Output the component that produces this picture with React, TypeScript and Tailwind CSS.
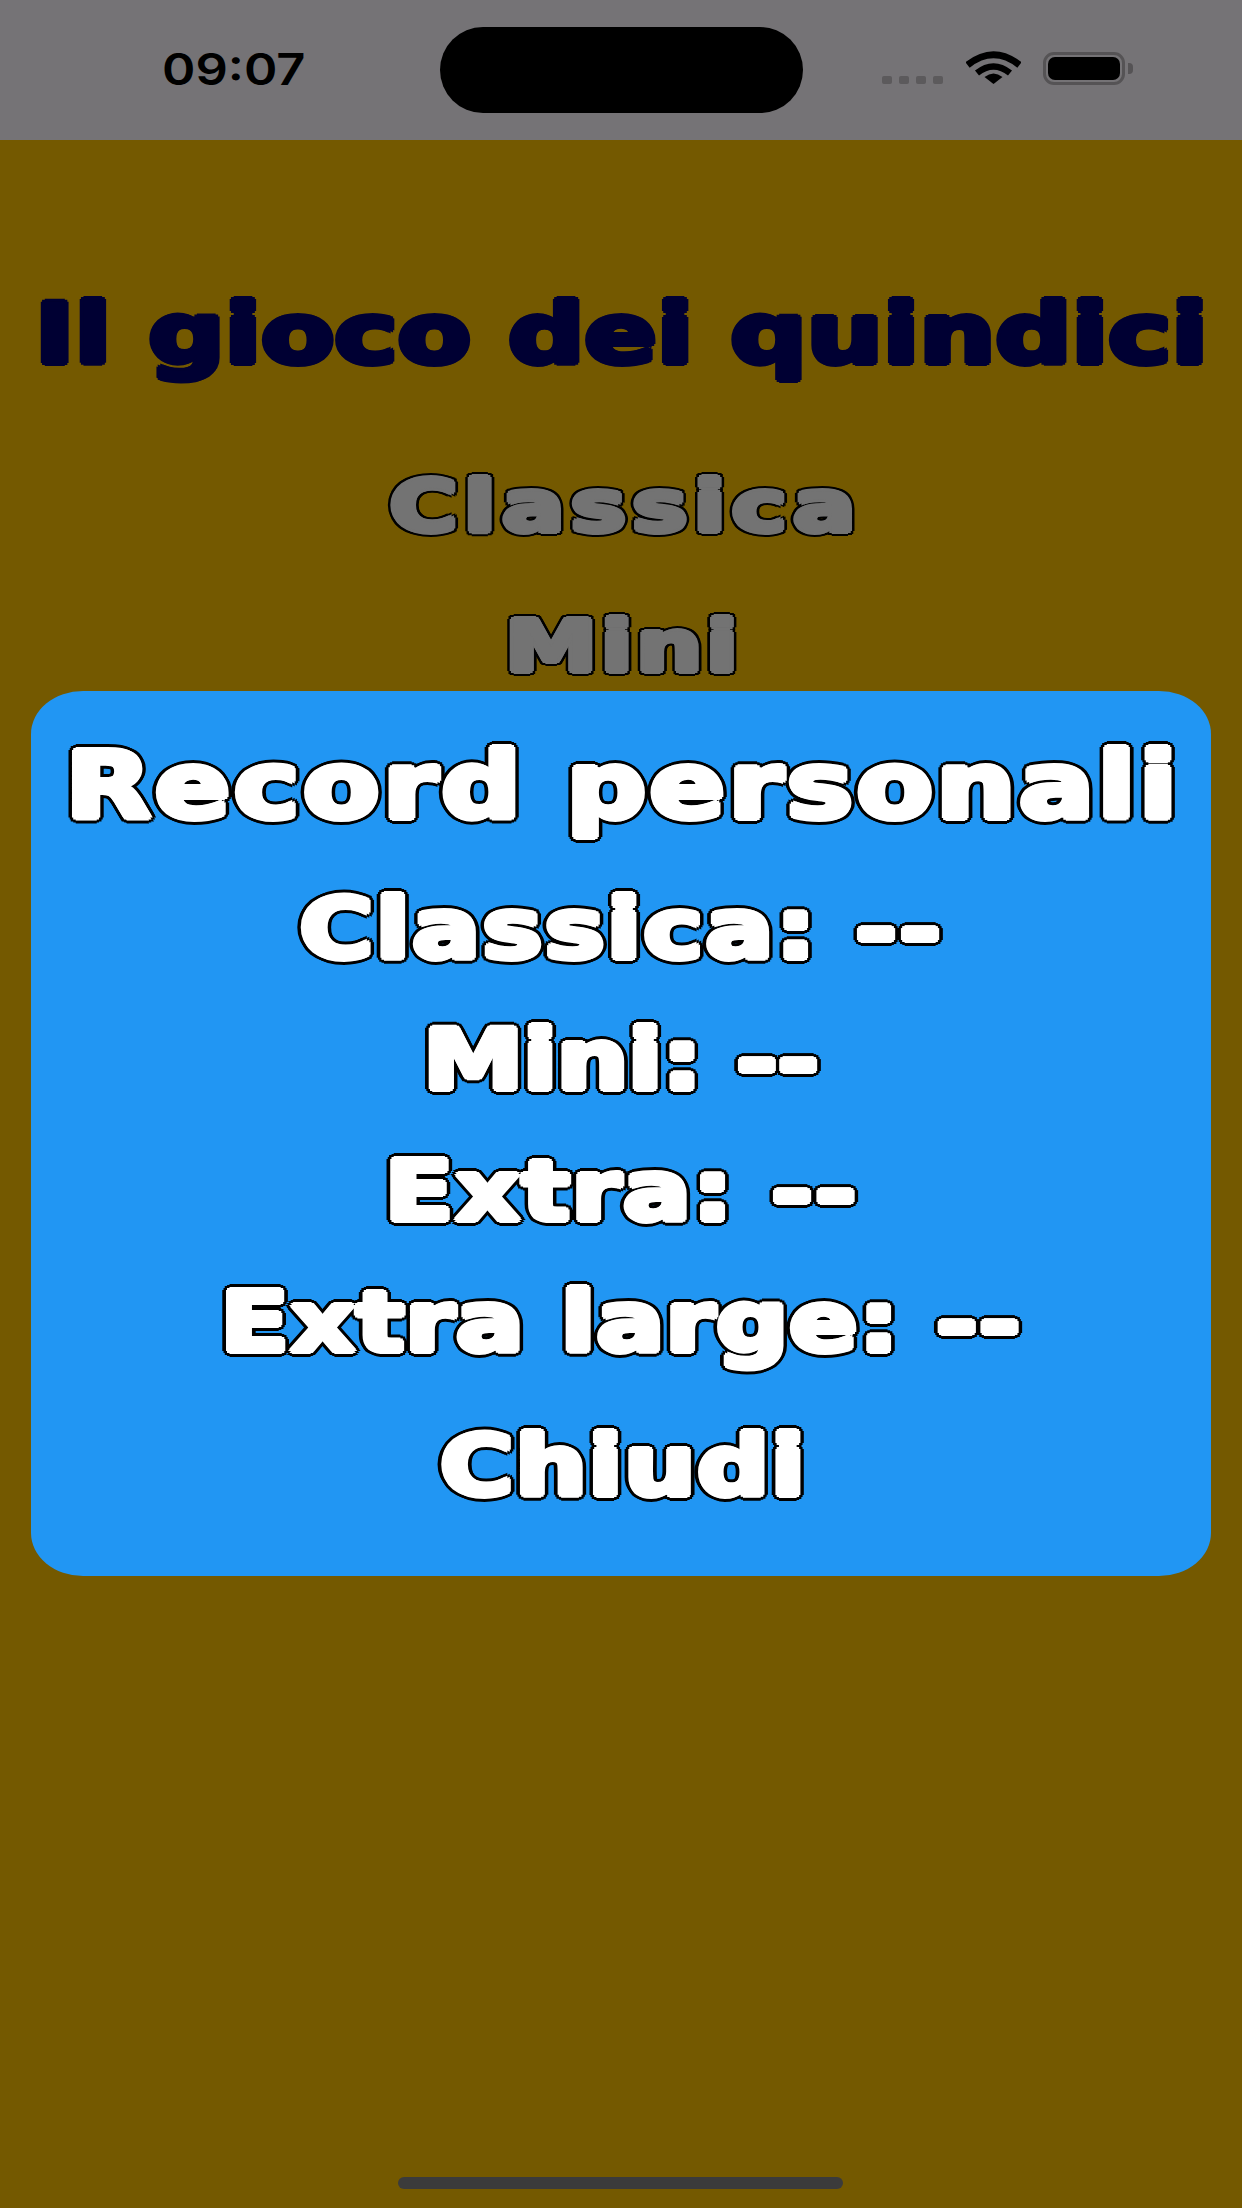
import React from 'react';

const ROUND_WHITE =
  'text-white [text-shadow:3px_0_0_#fff,-3px_0_0_#fff,0_3px_0_#fff,0_-3px_0_#fff,2px_2px_0_#fff,-2px_2px_0_#fff,2px_-2px_0_#fff,-2px_-2px_0_#fff,6px_0_0_#000,-6px_0_0_#000,0_6px_0_#000,0_-6px_0_#000,4px_4px_0_#000,-4px_4px_0_#000,4px_-4px_0_#000,-4px_-4px_0_#000,5px_2px_0_#000,-5px_2px_0_#000,5px_-2px_0_#000,-5px_-2px_0_#000,2px_5px_0_#000,-2px_5px_0_#000,2px_-5px_0_#000,-2px_-5px_0_#000]';

const ROUND_GRAY =
  'text-[#737373] [text-shadow:3px_0_0_#737373,-3px_0_0_#737373,0_3px_0_#737373,0_-3px_0_#737373,2px_2px_0_#737373,-2px_2px_0_#737373,2px_-2px_0_#737373,-2px_-2px_0_#737373,5px_0_0_#000,-5px_0_0_#000,0_5px_0_#000,0_-5px_0_#000,4px_3px_0_#000,-4px_3px_0_#000,4px_-3px_0_#000,-4px_-3px_0_#000,3px_4px_0_#000,-3px_4px_0_#000,3px_-4px_0_#000,-3px_-4px_0_#000]';

const ROUND_NAVY =
  'text-[#000033] [text-shadow:3px_0_0_#000033,-3px_0_0_#000033,0_3px_0_#000033,0_-3px_0_#000033,2px_2px_0_#000033,-2px_2px_0_#000033,2px_-2px_0_#000033,-2px_-2px_0_#000033]';

const FONT = "font-['DejaVu_Sans',sans-serif] font-bold whitespace-nowrap";

const StatusBar: React.FC = () => (
  <div className="flex h-[140px] items-start bg-[#757376]">
    <div className="w-[440px] pt-[43px] pl-[162px]">
      <span className="inline-block origin-left scale-x-[1.15] font-['Inter',sans-serif] text-[44px] leading-[52px] font-semibold text-black">
        09:07
      </span>
    </div>
    <div className="mt-[27px] h-[86px] w-[363px] rounded-[43px] bg-black" />
    <div className="ml-[79px] flex gap-[7px] pt-[76px]">
      <span className="h-[8px] w-[10px] rounded-[2px] bg-[#5c5a5c]" />
      <span className="h-[8px] w-[10px] rounded-[2px] bg-[#5c5a5c]" />
      <span className="h-[8px] w-[10px] rounded-[2px] bg-[#5c5a5c]" />
      <span className="h-[8px] w-[10px] rounded-[2px] bg-[#5c5a5c]" />
    </div>
    <svg className="mt-[51px] ml-[23px]" width="55" height="33" viewBox="0 0 55 33">
      <path d="M1.5 14 Q27.5 -6.5 53.5 14" fill="none" stroke="#000" strokeWidth="7" />
      <path d="M11 22 Q27.5 9 44 22" fill="none" stroke="#000" strokeWidth="6.5" />
      <path d="M18.5 26 Q27.5 19 36.5 26 L27.5 33 Z" fill="#000" />
    </svg>
    <div className="mt-[52px] ml-[22px] flex items-center">
      <div className="h-[33px] w-[82px] rounded-[11px] border-[3px] border-[#555355] p-[2px]">
        <div className="h-full w-full rounded-[7px] bg-black" />
      </div>
      <div className="ml-[3px] h-[11px] w-[5px] rounded-r-[4px] bg-[#555355]" />
    </div>
  </div>
);

const ModalLine: React.FC<{ text: string; className: string }> = ({ text, className }) => (
  <div className={`${FONT} ${ROUND_WHITE} ${className} scale-x-[1.2] text-center leading-[131px]`}>{text}</div>
);

export default function App() {
  return (
    <div className="relative h-[2208px] w-[1242px] overflow-hidden bg-[#745900]">
      <StatusBar />
      <div className="flex flex-col items-center">
        <h1 className={`${FONT} ${ROUND_NAVY} mt-[135px] scale-x-[1.285] text-[83px] leading-[120px]`}>
          Il gioco dei quindici
        </h1>
        <div className={`${FONT} ${ROUND_GRAY} mt-[67px] scale-x-[1.3] pl-[8px] text-[71px] leading-[90px] tracking-[5px]`}>
          Classica
        </div>
        <div className={`${FONT} ${ROUND_GRAY} mt-[50px] scale-x-[1.3] pl-[3px] text-[71px] leading-[90px] tracking-[3px]`}>
          Mini
        </div>
      </div>

      <div className="absolute top-[691px] left-[31px] flex h-[885px] w-[1180px] flex-col items-center rounded-[52px/43px] bg-[#2196f3] pt-[30px]">
        <ModalLine text="Record personali" className="pl-[3px] text-[93px] tracking-[2.7px]" />
        <ModalLine text="Classica: --" className="mt-3 text-[84px] tracking-[1.8px]" />
        <ModalLine text="Mini: --" className="text-[84px] tracking-[-0.5px]" />
        <ModalLine text="Extra: --" className="text-[84px] tracking-[1.35px]" />
        <ModalLine text="Extra large: --" className="text-[84px] tracking-[0.8px]" />
        <ModalLine text="Chiudi" className="mt-[13px] pl-[3px] text-[84px] tracking-[1.1px]" />
      </div>

      <div className="absolute bottom-[19px] left-[398px] h-[12px] w-[445px] rounded-full bg-[#3b3b3b]" />
    </div>
  );
}
